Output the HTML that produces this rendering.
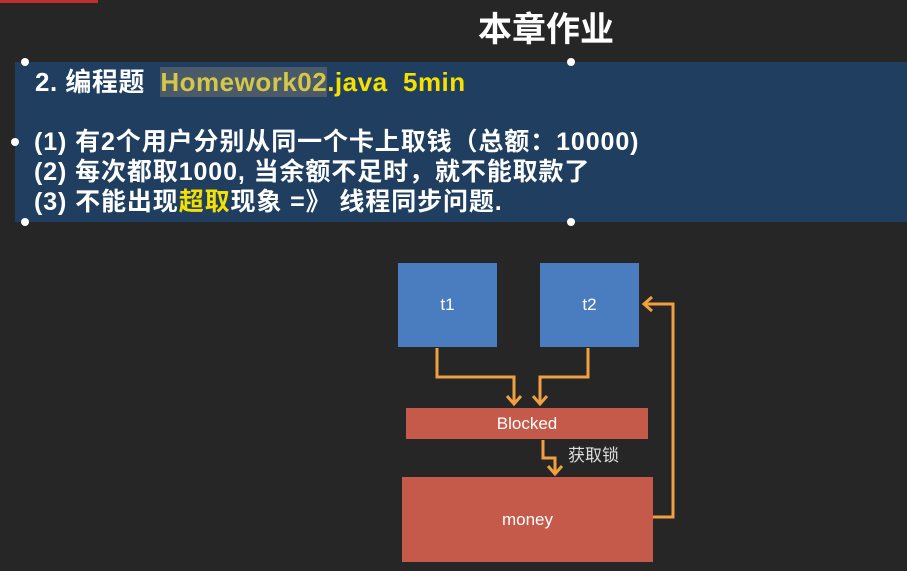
<!DOCTYPE html>
<html><head><meta charset="utf-8"><style>
body{margin:0;width:907px;height:571px;background:#262626;overflow:hidden;position:relative;font-family:"Liberation Sans","Noto Sans CJK SC",sans-serif;}
.t{position:absolute;color:#fff;font-weight:bold;white-space:nowrap}
.h{position:absolute;width:8px;height:8px;border-radius:50%;background:#fff}
.b{position:absolute;color:#fff;font-size:17px;display:flex;align-items:center;justify-content:center}
</style></head><body>
<div style="position:absolute;left:0;top:0;width:98px;height:3px;background:#c0302a"></div>
<div class="t" style="left:478px;top:2px;font-size:34px">本章作业</div>
<div style="position:absolute;left:15px;top:62px;width:892px;height:160px;background:#203f60"></div>
<div class="h" style="left:21px;top:58px"></div><div class="h" style="left:567px;top:58px"></div>
<div class="h" style="left:11px;top:138px"></div>
<div class="h" style="left:21px;top:218px"></div><div class="h" style="left:567px;top:218px"></div>
<div class="t" style="left:35px;top:62px;font-size:26px;letter-spacing:0.5px">2. 编程题 &nbsp;<span style="color:#d4c84a;background:#4a5a68">Homework02</span><span style="color:#f5e000">.java &nbsp;5min</span></div>
<div class="t" style="left:34px;top:127px;font-size:25px;line-height:30px;letter-spacing:0.9px">(1) 有2个用户分别从同一个卡上取钱（总额：10000)<br>(2) 每次都取1000, 当余额不足时，就不能取款了<br>(3) 不能出现<span style="color:#f5e000">超取</span>现象 =》 线程同步问题.</div>
<div class="b" style="left:398px;top:263px;width:99px;height:84px;background:#4a7cc0">t1</div>
<div class="b" style="left:540px;top:263px;width:99px;height:84px;background:#4a7cc0">t2</div>
<div class="b" style="left:406px;top:408px;width:242px;height:31px;background:#c65a4a">Blocked</div>
<div class="b" style="left:402px;top:477px;width:251px;height:85px;background:#c65a4a">money</div>
<div style="position:absolute;left:568px;top:441px;color:#ddd;font-size:17px;font-family:'Noto Sans CJK SC',sans-serif">获取锁</div>
<svg width="907" height="571" style="position:absolute;left:0;top:0" fill="none" stroke="#f0a040" stroke-width="3">
<path d="M437 348V377H514V404M507 396L514 404L521 396"/>
<path d="M588 348V377H540V404M533 396L540 404L547 396"/>
<path d="M543 440V458H555V474M548 466L555 474L562 466"/>
<path d="M653 517H673V304H644M652 297L644 304L652 311"/>
</svg>
</body></html>
